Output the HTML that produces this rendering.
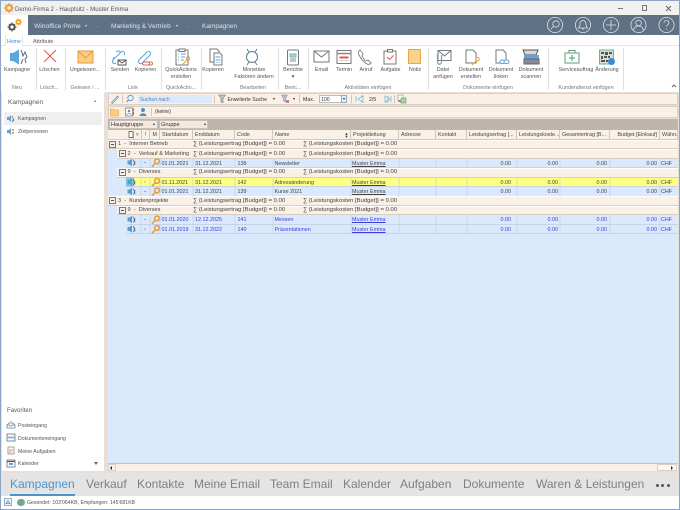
<!DOCTYPE html>
<html><head><meta charset="utf-8">
<style>
*{box-sizing:border-box}
html,body{margin:0;padding:0}
body{width:680px;height:510px;overflow:hidden;background:#e9dfd7;font-family:"Liberation Sans",sans-serif;color:#444}
div,span,svg{position:absolute}
#w{left:0;top:0;width:680px;height:510px;background:#e9dfd7;overflow:hidden;filter:blur(.3px)}
.t{white-space:nowrap;font-size:5.2px;line-height:7px;color:#555}
.c{white-space:nowrap;font-size:5.4px;line-height:6.7px;color:#555;text-align:center;transform:translateX(-50%)}
.g{color:#777}
.h{white-space:nowrap;font-size:5.4px;line-height:10.500px;top:130px;height:9.5px;background:#faf0e6;border-right:1px solid #cfc8c0;border-bottom:1px solid #cfc8c0;color:#444;padding-left:2px;overflow:hidden}
.r{left:108px;width:570px;height:9.5px}
.grp{background:#faf0e6;border-bottom:1px solid #d6cdc4;border-top:1px solid #fff}
.d{background:#dbe9fd;border-bottom:1px solid #c6d4e6}
.y{background:#ffff80;border-bottom:1px solid #c6d4e6}
.s{white-space:nowrap;font-size:5.4px;line-height:11px;color:#444}
.m{font-size:5.9px}
.b{color:#3b3bdc}
.u{text-decoration:underline}
.n{text-align:right}
.v{width:1px;background:#e2e0dd}
.tb{white-space:nowrap;font-size:12px;line-height:16px;color:#808080;top:476px}
.x{width:7px;height:7px;border:1px solid #777;background:#f4f1ec}
.x:after{content:"";position:absolute;left:1px;top:2px;width:3px;height:1px;background:#555}
</style></head>
<body>
<div id="w">
<!-- window -->
<div style="left:0;top:0;width:680px;height:1px;background:#8fa3c3"></div>
<div style="left:0;top:1px;width:680px;height:14px;background:#f1f1f1"></div>
<svg style="left:4px;top:3px" width="10" height="10" viewBox="0 0 10 10"><circle cx="5" cy="5" r="2.8" fill="none" stroke="#ee9a2e" stroke-width="2"/><path d="M5 0v2M5 8v2M0 5h2M8 5h2M1.500 1.500l1.400 1.400M7.100 7.100l1.400 1.400M1.500 8.500l1.400-1.400M7.100 2.900l1.400-1.400" stroke="#ee9a2e" stroke-width="1.200"/></svg>
<div class="t" style="left:15px;top:6px;font-size:6.100px">Demo-Firma 2 - Hauptsitz - Muster Emma</div>
<div style="left:618px;top:8px;width:5px;height:1px;background:#777"></div>
<div style="left:642px;top:5px;width:5px;height:6px;border:1px solid #777"></div>
<svg style="left:665px;top:5px" width="7" height="7" viewBox="0 0 7 7"><path d="M1 1l5 5M6 1L1 6" stroke="#666" stroke-width="1"/></svg>

<!-- nav -->
<div style="left:0;top:15px;width:680px;height:20px;background:#5f7185"></div>
<div style="left:1px;top:15px;width:27px;height:20px;background:#fff"></div>
<svg style="left:6px;top:18px" width="17" height="15" viewBox="0 0 17 15"><circle cx="6" cy="9" r="2.600" fill="none" stroke="#555" stroke-width="2"/><path d="M6 4.500v1.500M6 12v1.500M1.500 9H3M9 9h1.500M3 6l1 1M8 11l1 1M3 12l1-1M8 7l1-1" stroke="#555" stroke-width="1.200"/><circle cx="12.500" cy="4" r="1.900" fill="none" stroke="#ef9b20" stroke-width="1.500"/><path d="M12.500 .5v1.200M12.500 6.300v1.200M9 4h1.200M14.800 4H16M10 1.500l.8.800M14.200 5.700l.8.800M10 6.500l.8-.8M14.200 2.300l.8-.8" stroke="#ef9b20" stroke-width="1"/></svg>
<div class="t" style="left:34px;top:23px;font-size:6.700px;color:#dfe4ea">Winoffice Prime</div>
<div style="left:84.500px;top:24.500px;border:1.500px solid transparent;border-top:2px solid #dfe4ea"></div>
<div class="t" style="left:94px;top:22.500px;font-size:6.400px;color:#8a98a8">→</div>
<div class="t" style="left:111px;top:23px;font-size:6.600px;color:#dfe4ea">Marketing &amp; Vertrieb</div>
<div style="left:175.500px;top:24.500px;border:1.500px solid transparent;border-top:2px solid #dfe4ea"></div>
<div class="t" style="left:185px;top:22.500px;font-size:6.400px;color:#8a98a8">→</div>
<div class="t" style="left:202px;top:23px;font-size:6.500px;color:#dfe4ea">Kampagnen</div>
<svg style="left:545px;top:16px" width="135" height="18" viewBox="0 0 135 18" fill="none" stroke="#dfe4ea" stroke-width=".8">
<circle cx="10" cy="9" r="7.600"/><circle cx="11" cy="8" r="3.200"/><path d="M8.600 10.400L6 13"/>
<circle cx="38" cy="9" r="7.600"/><path d="M33.500 12h9c-1.200-1-1.500-2-1.500-4 0-2-1.300-3.500-3-3.500S35 6 35 8c0 2-.3 3-1.500 4zM37 13h2"/>
<circle cx="66" cy="9" r="7.600"/><path d="M66 4v10M61 9h10"/>
<circle cx="93.500" cy="9" r="7.600"/><circle cx="93.500" cy="7" r="2.800"/><path d="M88.500 14c.8-3 2.500-4 5-4s4.200 1 5 4"/>
<circle cx="121.500" cy="9" r="7.600"/><path d="M119 7c0-1.500 1.200-2.500 2.500-2.500s2.500 1 2.500 2.300c0 1.700-2.500 2-2.500 4M121.500 12.500v1"/>
</svg>

<!-- tabs -->
<div style="left:1px;top:35px;width:678px;height:10px;background:#fff"></div>
<div style="left:0;top:45px;width:680px;height:47px;background:#fff;border-top:1px solid #e6e6e6"></div>
<div style="left:5px;top:35px;width:18px;height:11px;background:#fff;border:1px solid #e6e6e6;border-top:0;border-bottom:0"></div>
<div class="t" style="left:7px;top:39px;color:#3c8ad0">Home</div>
<div class="t" style="left:33px;top:39px;font-size:5.500px">Attribute</div>

<!-- ribbon separators -->
<div class="v" style="left:36px;top:48px;height:42px"></div>
<div class="v" style="left:65px;top:48px;height:42px"></div>
<div class="v" style="left:105px;top:48px;height:42px"></div>
<div class="v" style="left:161px;top:48px;height:42px"></div>
<div class="v" style="left:201px;top:48px;height:42px"></div>
<div class="v" style="left:278px;top:48px;height:42px"></div>
<div class="v" style="left:308px;top:48px;height:42px"></div>
<div class="v" style="left:428px;top:48px;height:42px"></div>
<div class="v" style="left:548px;top:48px;height:42px"></div>
<div class="v" style="left:623px;top:48px;height:42px"></div>

<!-- ribbon icons -->
<svg style="left:0;top:45px" width="680" height="22" viewBox="0 45 680 22" fill="none" stroke-width="1">
<path d="M10 53h3l6-3.500v15L13 61h-3z" fill="#5ca6da"/><path d="M21 50l2 6 2-4 2 5-2 2 1 4M21 64l2-5" stroke="#667"/>
<path d="M44 50l12 12M56 50L44 62" stroke="#e3574c"/>
<rect x="78" y="51" width="15" height="12" fill="#f8cf7e" stroke="#e89a3c"/><path d="M78 51l7.500 7 7.500-7" stroke="#e89a3c"/>
<path d="M113 60l8-8c2-2 5 1 3 3M113 60c-2 2 1 5 3 3M116 52c2-2 5-1 4 1M114 57l-1 2" stroke="#5ca6da"/><path d="M118 60h8v5h-8zM118 60l4 3 4-3" stroke="#555" fill="#fff"/>
<path d="M139 60l8-8c2-2 5 1 3 3l-7 7M139 60c-2 2 1 5 3 3" stroke="#5ca6da"/><path d="M144 62h4c2 0 2 3 0 3h-4c-2 0-2-3 0-3zM149 62h2c2 0 2 3 0 3h-3" stroke="#d9685c"/>
<path d="M176 50h12v15h-12z" stroke="#777"/><rect x="179" y="49" width="6" height="2.500" stroke="#777" fill="#fff"/><path d="M178 54h1M181 54h5M178 57h1M181 57h4M178 60h1M181 60h3" stroke="#5ca6da"/><path d="M183 64l4-4" stroke="#ec9a3a"/><circle cx="188" cy="58.500" r="1.800" stroke="#ec9a3a"/>
<path d="M210 49h7l2 2v11h-9z" stroke="#777"/><path d="M214 53h6l2 2v10h-8z" stroke="#777" fill="#fff"/><path d="M215.500 56h5v2h-5zM215.500 59h5v2h-5zM215.500 62h5v1h-5z" fill="#a9d0ee" stroke="none"/>
<circle cx="252" cy="57" r="5.500" stroke="#5c7c94"/><path d="M247 49l2 3M257 49l-2 3M247 65l2-3M257 65l-2-3" stroke="#5c7c94"/>
<rect x="287.500" y="50" width="11" height="15" rx="1" stroke="#777"/><rect x="290" y="54" width="6" height="3" fill="#a9d0ee" stroke="#7ba"/><path d="M290 59h6M290 61h6" stroke="#888"/>
<rect x="314" y="51" width="15" height="11" stroke="#777"/><path d="M314 51l7.500 6 7.500-6" stroke="#777"/>
<rect x="337" y="50.500" width="14" height="13" stroke="#777"/><path d="M337 53.500h14" stroke="#888" stroke-width="1.500"/><path d="M339.500 57.500h9" stroke="#e3574c" stroke-width="2"/><path d="M339.500 60.500h9" stroke="#ccc"/>
<path d="M360 50c-2 1-2 3-1 5 2 4 4 7 8 9 2 1 3 0 4-1l-3-3-2 1c-2-1-3-3-4-5l1-2z" stroke="#888"/>
<rect x="384" y="51" width="12" height="13" stroke="#777"/><rect x="387.500" y="49.500" width="5" height="2.500" stroke="#777" fill="#fff"/><path d="M387 57l2.500 2.500 4-4" stroke="#e3574c"/>
<rect x="408.500" y="49.500" width="12" height="14" fill="#f8d488" stroke="#e8a550"/>
<rect x="438" y="50.500" width="13" height="10" stroke="#777"/><path d="M438 50.500l6.500 5.500 6.500-5.500" stroke="#777"/><path d="M437.500 54v8c0 3 4 3 4 0v-7" stroke="#5ca6da" stroke-width="1.200"/>
<path d="M466 50h7l3 3v10h-10z" stroke="#777"/><path d="M472 65l5-5" stroke="#ec9a3a"/><circle cx="477.500" cy="59" r="1.800" stroke="#ec9a3a"/>
<path d="M496 50h7l3 3v10h-10z" stroke="#777"/><rect x="500" y="60" width="5" height="3.500" rx="1.700" stroke="#5ca6da" fill="#fff"/><rect x="504" y="60" width="5" height="3.500" rx="1.700" stroke="#5ca6da" fill="#fff"/>
<path d="M525 55l-2-5h15l-2 5z" stroke="#555" fill="#d8d8d8"/><rect x="524" y="55" width="15" height="4" fill="#5ca6da"/><rect x="524" y="59" width="15" height="5" fill="#889" stroke="#666"/>
<rect x="565" y="53" width="14" height="10" stroke="#5f9a80"/><path d="M569 53v-2.500h6V53" stroke="#5f9a80"/><path d="M572 55v6M569 58h6" stroke="#71bd8f" stroke-width="1.500"/>
<rect x="599.500" y="50" width="14" height="14" fill="#d6ded6" stroke="#6bb58c"/><path d="M601 52h3v2h-3zM605 52h3v3h-3zM609 52h3v2h-3zM601 56h2v3h-2zM604 56h3v2h-3zM608 56h2v2h-2zM601 60h4v2h-4zM606 60h2v2h-2z" fill="#555" stroke="none"/><circle cx="611.500" cy="61.500" r="3.500" fill="#3c8ad0"/>
</svg>
<svg style="left:670px;top:83px" width="8" height="6" viewBox="0 0 8 6"><path d="M2 4l2-2 2 2" stroke="#666" fill="none"/></svg>

<!-- ribbon labels -->
<div class="c" style="left:17px;top:67px">Kampagne</div>
<div class="c" style="left:49.500px;top:67px">Löschen</div>
<div class="c" style="left:85px;top:67px">Ungelesen...</div>
<div class="c" style="left:120px;top:67px">Senden</div>
<div class="c" style="left:145.500px;top:67px">Kopieren</div>
<div class="c" style="left:181px;top:67px">QuickActions<br>erstellen</div>
<div class="c" style="left:213px;top:67px">Kopieren</div>
<div class="c" style="left:254px;top:67px">Monetäre<br>Faktoren ändern</div>
<div class="c" style="left:293px;top:67px">Berichte<br>▾</div>
<div class="c" style="left:321.500px;top:67px">Email</div>
<div class="c" style="left:344px;top:67px">Termin</div>
<div class="c" style="left:366px;top:67px">Anruf</div>
<div class="c" style="left:390.500px;top:67px">Aufgabe</div>
<div class="c" style="left:415px;top:67px">Notiz</div>
<div class="c" style="left:443px;top:67px">Datei<br>anfügen</div>
<div class="c" style="left:471px;top:67px">Dokument<br>erstellen</div>
<div class="c" style="left:501px;top:67px">Dokument<br>linken</div>
<div class="c" style="left:531px;top:67px">Dokument<br>scannen</div>
<div class="c" style="left:576px;top:67px">Serviceauftrag</div>
<div class="c" style="left:607px;top:67px">Änderung</div>
<div class="c g" style="left:17px;top:84.500px">Neu</div>
<div class="c g" style="left:49.500px;top:84.500px">Lösch...</div>
<div class="c g" style="left:85px;top:84.500px">Gelesen / ...</div>
<div class="c g" style="left:133px;top:84.500px">Link</div>
<div class="c g" style="left:181px;top:84.500px">QuickActio...</div>
<div class="c g" style="left:253px;top:84.500px">Bearbeiten</div>
<div class="c g" style="left:293px;top:84.500px">Beric...</div>
<div class="c g" style="left:368px;top:84.500px">Aktivitäten einfügen</div>
<div class="c g" style="left:488px;top:84.500px">Dokumente einfügen</div>
<div class="c g" style="left:586px;top:84.500px">Kundendienst einfügen</div>

<!-- sidebar -->
<div style="left:2px;top:92px;width:102px;height:379px;background:#fff"></div>
<div class="t" style="left:8px;top:99px;font-size:6.500px">Kampagnen</div>
<div class="t" style="left:94px;top:99px;font-size:6px;color:#777">▪</div>
<div style="left:4px;top:112px;width:98px;height:13px;background:#efefef"></div>
<svg style="left:6px;top:114px" width="9" height="9" viewBox="0 0 9 9"><path d="M1 3h2l2-2v7L3 6H1z" fill="#5ca6da"/><path d="M6 2l2 5M6 8l2-3" stroke="#666" stroke-width=".7"/></svg>
<div class="t" style="left:18px;top:116px">Kampagnen</div>
<svg style="left:6px;top:127px" width="9" height="9" viewBox="0 0 9 9"><path d="M1 3h2l2-2v7L3 6H1z" fill="#5ca6da"/><path d="M6 2h2v2H6zM6 5h2v2H6z" fill="#e9a14a"/></svg>
<div class="t" style="left:18px;top:129px">Zielpersonen</div>
<div class="t" style="left:7px;top:408px;font-size:6px">Favoriten</div>
<svg style="left:6px;top:420px" width="10" height="50" viewBox="0 0 10 50" fill="none" stroke-width=".7">
<path d="M1 5l2-2h4l2 2v3H1zM1 5h2.500l1 1h1l1-1H9" stroke="#5a7d9c"/><path d="M5 .5v3" stroke="#e9a14a"/>
<rect x="1" y="14" width="8" height="7" stroke="#556"/><rect x="1" y="16.500" width="8" height="2" fill="#8ab7dc" stroke="none"/>
<rect x="2" y="27" width="6" height="7" stroke="#777"/><path d="M3 30h4M3 32h3" stroke="#d9685c"/>
<rect x="1" y="40" width="8" height="7" stroke="#556"/><path d="M1 41.500h8" stroke="#556" stroke-width="1.200"/><path d="M3 44h4" stroke="#5ca6da" stroke-width="2"/>
</svg>
<div class="t" style="left:18px;top:423px">Posteingang</div>
<div class="t" style="left:18px;top:436px">Dokumenteneingang</div>
<div class="t" style="left:18px;top:449px">Meine Aufgaben</div>
<div class="t" style="left:18px;top:461px">Kalender</div>
<div style="left:94px;top:462px;border:2.500px solid transparent;border-top:3px solid #666"></div>

<!-- toolbars -->
<div style="left:108px;top:93px;width:570px;height:11.500px;background:#faf0e6;border:1px solid #d9d0c7"></div>
<div style="left:108px;top:106px;width:570px;height:11.500px;background:#faf0e6;border:1px solid #d9d0c7"></div>
<svg style="left:110px;top:94px" width="10" height="10" viewBox="0 0 10 10" fill="none"><path d="M1.500 8.500L7.500 2l1 1-6 6.500z" stroke="#6b9bbb" stroke-width=".8"/></svg>
<div class="v" style="left:121.500px;top:95px;height:8px;background:#cfc8c0"></div>
<svg style="left:125px;top:94px" width="10" height="10" viewBox="0 0 10 10" fill="none"><circle cx="5.500" cy="4" r="2.700" stroke="#4a90c8" stroke-width=".8"/><path d="M3.500 6L1.500 8" stroke="#4a90c8"/></svg>
<div style="left:138px;top:94.500px;width:74px;height:8.500px;background:#dbe9fd"></div>
<div class="t" style="left:139.500px;top:96.500px;color:#6a7f99;font-style:italic">Suchen nach</div>
<div class="v" style="left:214px;top:95px;height:8px;background:#cfc8c0"></div>
<svg style="left:218px;top:94px" width="8" height="10" viewBox="0 0 8 10"><path d="M.5 1h7L5 4.500V9L3 8V4.500z" fill="#b8c4bc" stroke="#667" stroke-width=".5"/></svg>
<div class="t" style="left:227.500px;top:96.500px;color:#333">Erweiterte Suche</div>
<div style="left:272.500px;top:97.500px;border:1.500px solid transparent;border-top:2px solid #333"></div>
<svg style="left:281px;top:94px" width="10" height="10" viewBox="0 0 10 10"><path d="M.5 1h6L4.500 4.500V8L2.500 7V4.500z" fill="#b8bcbc" stroke="#889" stroke-width=".5"/><rect x="5" y="6" width="3" height="3" fill="#c878a8"/></svg>
<div style="left:293px;top:97.500px;border:1.500px solid transparent;border-top:2px solid #333"></div>
<div class="v" style="left:298.500px;top:95px;height:8px;background:#cfc8c0"></div>
<div class="t" style="left:303px;top:96.500px;color:#333">Max.</div>
<div style="left:319px;top:94.500px;width:28px;height:8.500px;background:#fff;border:1px solid #bbb"></div>
<div class="t" style="left:321px;top:96.500px;color:#333">100</div>
<div style="left:341px;top:95px;width:6px;height:8px;background:#e8eef8;border:1px solid #9ab"></div>
<div style="left:342.500px;top:98px;border:1.500px solid transparent;border-top:2px solid #1a1a9c"></div>
<div class="v" style="left:350.500px;top:95px;height:8px;background:#cfc8c0"></div>
<svg style="left:355px;top:95px" width="50" height="9" viewBox="0 0 50 9" fill="none" stroke="#69b0de" stroke-width=".7"><path d="M1 1v6M8 1L3 4l5 3zM6 1h2M6 7h2"/><path d="M33 1v6h-3M30 1l5 3-5 3zM36 1v6"/></svg>
<div class="t" style="left:369px;top:96.500px;color:#333">2/5</div>
<div class="v" style="left:394px;top:95px;height:8px;background:#cfc8c0"></div>
<svg style="left:397px;top:94px" width="10" height="10" viewBox="0 0 10 10"><rect x="1" y="1" width="5" height="6" fill="#fff" stroke="#888" stroke-width=".6"/><rect x="4" y="4" width="5" height="5" fill="#a8d8a0" stroke="#4f9a5a" stroke-width=".6"/><rect x="1.500" y="6" width="2" height="2" fill="#d9685c"/></svg>
<svg style="left:110px;top:107px" width="46" height="10" viewBox="0 0 46 10"><path d="M.5 2h3l1 1h4v6h-8z" fill="#f8cf7e" stroke="#e89a3c" stroke-width=".6"/><rect x="15.500" y="1" width="7" height="8" fill="#fff" stroke="#555" stroke-width=".6"/><circle cx="19" cy="4" r="1.300" fill="#888"/><path d="M17 8c0-2 4-2 4 0" stroke="#888" stroke-width=".7" fill="none"/><rect x="23" y="1.500" width="1" height="3" fill="#e3574c"/><rect x="23" y="5" width="1" height="3" fill="#4f9a5a"/><circle cx="33" cy="3" r="2" fill="#4a90c8"/><path d="M29.500 9c0-3.500 7-3.500 7 0z" fill="#4a90c8"/></svg>
<div class="v" style="left:150.500px;top:108px;height:8px;background:#cfc8c0"></div>
<div class="t" style="left:155px;top:109px;color:#333">(keine)</div>

<!-- group panel -->
<div style="left:108px;top:118.500px;width:570px;height:11.500px;background:#bdb6ae"></div>
<div style="left:109px;top:119.500px;width:49px;height:9.500px;background:#f3e9df;border:1px solid #c9c0b7"></div>
<div class="t" style="left:111px;top:122px;color:#333;font-size:5.600px">Hauptgruppe</div>
<div style="left:153px;top:121.500px;border:1.500px solid transparent;border-bottom:2px solid #333"></div>
<div style="left:159px;top:119.500px;width:49px;height:9.500px;background:#f3e9df;border:1px solid #c9c0b7"></div>
<div class="t" style="left:161px;top:122px;color:#333;font-size:5.600px">Gruppe</div>
<div style="left:203.500px;top:121.500px;border:1.500px solid transparent;border-bottom:2px solid #333"></div>

<!-- grid header -->
<div class="h" style="left:108px;width:19px;border-right:0"></div>
<div class="h" style="left:127px;width:6.500px"></div>
<div class="h" style="left:133.500px;width:8px;padding-left:2.500px">▿</div>
<div class="h" style="left:141.500px;width:8.500px;padding-left:3px">!</div>
<div class="h" style="left:150px;width:10px;padding-left:2.500px">M</div>
<div class="h" style="left:160px;width:33px">Startdatum</div>
<div class="h" style="left:193px;width:42px">Enddatum</div>
<div class="h" style="left:235px;width:38px">Code</div>
<div class="h" style="left:273px;width:78px">Name</div>
<div class="h" style="left:351px;width:48px">Projektleitung</div>
<div class="h" style="left:399px;width:37px">Adresse</div>
<div class="h" style="left:436px;width:31px">Kontakt</div>
<div class="h" style="left:467px;width:50px">Leistungsertrag [...</div>
<div class="h" style="left:517px;width:43px">Leistungskoste...</div>
<div class="h" style="left:560px;width:50px">Gesamtertrag [B...</div>
<div class="h" style="left:610px;width:50px;text-align:right;padding-right:2px">Budget [Einkauf]</div>
<div class="h" style="left:660px;width:18px">Währu</div>
<svg style="left:128px;top:131px" width="6" height="7" viewBox="0 0 6 7"><path d="M1 .5h3l1 1v5H1z" fill="#fff" stroke="#444" stroke-width=".7"/></svg>
<div class="t" style="left:344.500px;top:131.500px;font-size:4px;color:#444;line-height:3.500px">▲<br>▼</div>

<!-- data area -->
<div style="left:108px;top:139.500px;width:570px;height:323.500px;background:#dbe9fd"></div>

<!-- rows -->
<div class="r grp" style="top:139.500px"></div>
<div class="r grp" style="top:149px;left:117px;width:561px"></div>
<div class="r d" style="top:158.500px;left:126px;width:552px"></div>
<div class="r grp" style="top:168px;left:117px;width:561px"></div>
<div class="r y" style="top:177.500px;left:126px;width:552px"></div>
<div class="r d" style="top:187px;left:126px;width:552px"></div>
<div class="r grp" style="top:196px"></div>
<div class="r grp" style="top:205.500px;left:117px;width:561px"></div>
<div class="r d" style="top:215px;left:126px;width:552px"></div>
<div class="r d" style="top:224.500px;left:126px;width:552px"></div>

<!-- col guide lines on data rows -->
<svg style="left:126px;top:158px" width="552" height="76" viewBox="126 158 552 76" stroke="#c2d0e2" stroke-width=".7">
<path d="M141 158.500v9.500M150 158.500v9.500M160 158.500v9.500M193 158.500v9.500M235 158.500v9.500M273 158.500v9.500M351 158.500v9.500M399 158.500v9.500M436 158.500v9.500M467 158.500v9.500M517 158.500v9.500M560 158.500v9.500M610 158.500v9.500M660 158.500v9.500"/>
<path d="M141 177.500v19M150 177.500v19M160 177.500v19M193 177.500v19M235 177.500v19M273 177.500v19M351 177.500v19M399 177.500v19M436 177.500v19M467 177.500v19M517 177.500v19M560 177.500v19M610 177.500v19M660 177.500v19"/>
<path d="M141 215v19M150 215v19M160 215v19M193 215v19M235 215v19M273 215v19M351 215v19M399 215v19M436 215v19M467 215v19M517 215v19M560 215v19M610 215v19M660 215v19"/>
</svg>

<!-- expanders -->
<div class="x" style="left:109px;top:140.500px"></div>
<div class="x" style="left:118.500px;top:150px"></div>
<div class="x" style="left:118.500px;top:169px"></div>
<div class="x" style="left:109px;top:197px"></div>
<div class="x" style="left:118.500px;top:206.500px"></div>

<!-- group text -->
<div class="s" style="left:118px;top:139px;font-size:5.600px">1 &nbsp;- &nbsp;Interner Betrieb</div>
<div class="s" style="left:127.500px;top:148.500px;font-size:5.600px">2 &nbsp;- &nbsp;Verkauf &amp; Marketing</div>
<div class="s" style="left:127.500px;top:167px;font-size:5.600px">9 &nbsp;- &nbsp;Diverses</div>
<div class="s" style="left:118px;top:195.500px;font-size:5.600px">3 &nbsp;- &nbsp;Kundenprojekte</div>
<div class="s" style="left:127.500px;top:205px;font-size:5.600px">9 &nbsp;- &nbsp;Diverses</div>

<div class="s m" style="left:193px;top:139px">∑ {Leistungsertrag [Budget]} = 0.00</div>
<div class="s m" style="left:303px;top:139px">∑ {Leistungskosten [Budget]} = 0.00</div>
<div class="s m" style="left:193px;top:148.500px">∑ {Leistungsertrag [Budget]} = 0.00</div>
<div class="s m" style="left:303px;top:148.500px">∑ {Leistungskosten [Budget]} = 0.00</div>
<div class="s m" style="left:193px;top:167px">∑ {Leistungsertrag [Budget]} = 0.00</div>
<div class="s m" style="left:303px;top:167px">∑ {Leistungskosten [Budget]} = 0.00</div>
<div class="s m" style="left:193px;top:195.500px">∑ {Leistungsertrag [Budget]} = 0.00</div>
<div class="s m" style="left:303px;top:195.500px">∑ {Leistungskosten [Budget]} = 0.00</div>
<div class="s m" style="left:193px;top:205px">∑ {Leistungsertrag [Budget]} = 0.00</div>
<div class="s m" style="left:303px;top:205px">∑ {Leistungskosten [Budget]} = 0.00</div>

<!-- row icons -->
<svg style="left:126px;top:158px" width="36" height="76" viewBox="0 0 36 76">
<g><path d="M1.500 2.500H3.500L6 .8v7.400L3.500 6.500H1.500z" fill="#5a9bd0"/><path d="M7 1.500l1.500 3-1 3M8.800 3v4" stroke="#5a7088" stroke-width=".8" fill="none"/><path d="M18 4.500h2" stroke="#888" stroke-width=".7"/><circle cx="31" cy="3.400" r="2.400" fill="none" stroke="#e59a3c" stroke-width="1.500"/><path d="M29.300 5.200L26.500 8l.8.800" stroke="#e59a3c" stroke-width="1.400" fill="none"/></g>
<g transform="translate(0,19.500)"><path d="M0 0h8v9H0z" fill="#7fc4e8"/><path d="M1.500 2.500H3.500L6 .8v7.400L3.500 6.500H1.500z" fill="#5a9bd0"/><path d="M7 1.500l1.500 3-1 3M8.800 3v4" stroke="#5a7088" stroke-width=".8" fill="none"/><path d="M18 4.500h2" stroke="#888" stroke-width=".7"/><circle cx="31" cy="3.400" r="2.400" fill="none" stroke="#e59a3c" stroke-width="1.500"/><path d="M29.300 5.200L26.500 8l.8.800" stroke="#e59a3c" stroke-width="1.400" fill="none"/></g>
<g transform="translate(0,29)"><path d="M1.500 2.500H3.500L6 .8v7.400L3.500 6.500H1.500z" fill="#5a9bd0"/><path d="M7 1.500l1.500 3-1 3M8.800 3v4" stroke="#5a7088" stroke-width=".8" fill="none"/><path d="M18 4.500h2" stroke="#888" stroke-width=".7"/><circle cx="31" cy="3.400" r="2.400" fill="none" stroke="#e59a3c" stroke-width="1.500"/><path d="M29.300 5.200L26.500 8l.8.800" stroke="#e59a3c" stroke-width="1.400" fill="none"/></g>
<g transform="translate(0,57)"><path d="M1.500 2.500H3.500L6 .8v7.400L3.500 6.500H1.500z" fill="#5a9bd0"/><path d="M7 1.500l1.500 3-1 3M8.800 3v4" stroke="#5a7088" stroke-width=".8" fill="none"/><path d="M18 4.500h2" stroke="#888" stroke-width=".7"/><circle cx="31" cy="3.400" r="2.400" fill="none" stroke="#e59a3c" stroke-width="1.500"/><path d="M29.300 5.200L26.500 8l.8.800" stroke="#e59a3c" stroke-width="1.400" fill="none"/></g>
<g transform="translate(0,66.500)"><path d="M1.500 2.500H3.500L6 .8v7.400L3.500 6.500H1.500z" fill="#5a9bd0"/><path d="M7 1.500l1.500 3-1 3M8.800 3v4" stroke="#5a7088" stroke-width=".8" fill="none"/><path d="M18 4.500h2" stroke="#888" stroke-width=".7"/><circle cx="31" cy="3.400" r="2.400" fill="none" stroke="#e59a3c" stroke-width="1.500"/><path d="M29.300 5.200L26.500 8l.8.800" stroke="#e59a3c" stroke-width="1.400" fill="none"/></g>
</svg>

<!-- data: row 138 -->
<div class="s" style="left:161.500px;top:158.500px">01.01.2021</div><div class="s" style="left:195px;top:158.500px">31.12.2021</div><div class="s" style="left:237.500px;top:158.500px">138</div><div class="s" style="left:274.500px;top:158.500px">Newsletter</div><div class="s u" style="left:352px;top:158.500px">Muster Emma</div>
<div class="s n" style="left:467px;width:44px;top:158.500px">0.00</div><div class="s n" style="left:517px;width:41px;top:158.500px">0.00</div><div class="s n" style="left:560px;width:47px;top:158.500px">0.00</div><div class="s n" style="left:610px;width:47px;top:158.500px">0.00</div><div class="s" style="left:661px;top:158.500px">CHF</div>
<!-- row 142 -->
<div class="s" style="left:161.500px;top:177.500px">01.11.2021</div><div class="s" style="left:195px;top:177.500px">31.12.2021</div><div class="s" style="left:237.500px;top:177.500px">142</div><div class="s" style="left:274.500px;top:177.500px">Adressänderung</div><div class="s u" style="left:352px;top:177.500px">Muster Emma</div>
<div class="s n" style="left:467px;width:44px;top:177.500px">0.00</div><div class="s n" style="left:517px;width:41px;top:177.500px">0.00</div><div class="s n" style="left:560px;width:47px;top:177.500px">0.00</div><div class="s n" style="left:610px;width:47px;top:177.500px">0.00</div><div class="s" style="left:661px;top:177.500px">CHF</div>
<!-- row 139 -->
<div class="s" style="left:161.500px;top:187px">01.01.2021</div><div class="s" style="left:195px;top:187px">31.12.2021</div><div class="s" style="left:237.500px;top:187px">139</div><div class="s" style="left:274.500px;top:187px">Kurse 2021</div><div class="s u" style="left:352px;top:187px">Muster Emma</div>
<div class="s n" style="left:467px;width:44px;top:187px">0.00</div><div class="s n" style="left:517px;width:41px;top:187px">0.00</div><div class="s n" style="left:560px;width:47px;top:187px">0.00</div><div class="s n" style="left:610px;width:47px;top:187px">0.00</div><div class="s" style="left:661px;top:187px">CHF</div>
<!-- row 141 -->
<div class="s b" style="left:161.500px;top:215px">01.01.2020</div><div class="s b" style="left:195px;top:215px">12.12.2025</div><div class="s b" style="left:237.500px;top:215px">141</div><div class="s b" style="left:274.500px;top:215px">Messen</div><div class="s b u" style="left:352px;top:215px">Muster Emma</div>
<div class="s n b" style="left:467px;width:44px;top:215px">0.00</div><div class="s n b" style="left:517px;width:41px;top:215px">0.00</div><div class="s n b" style="left:560px;width:47px;top:215px">0.00</div><div class="s n b" style="left:610px;width:47px;top:215px">0.00</div><div class="s b" style="left:661px;top:215px">CHF</div>
<!-- row 140 -->
<div class="s b" style="left:161.500px;top:224.500px">01.01.2019</div><div class="s b" style="left:195px;top:224.500px">31.12.2022</div><div class="s b" style="left:237.500px;top:224.500px">140</div><div class="s b" style="left:274.500px;top:224.500px">Präsentationen</div><div class="s b u" style="left:352px;top:224.500px">Muster Emma</div>
<div class="s n b" style="left:467px;width:44px;top:224.500px">0.00</div><div class="s n b" style="left:517px;width:41px;top:224.500px">0.00</div><div class="s n b" style="left:560px;width:47px;top:224.500px">0.00</div><div class="s n b" style="left:610px;width:47px;top:224.500px">0.00</div><div class="s b" style="left:661px;top:224.500px">CHF</div>

<!-- scrollbar -->
<div style="left:108px;top:463px;width:570px;height:8px;background:#faf0e6;border-top:1px solid #b9c4d6"></div>
<div style="left:108px;top:464px;width:8px;height:7px;background:#f3f3f3;border:1px solid #d9d0c7"></div>
<div style="left:110px;top:465.500px;border:2px solid transparent;border-right:2.500px solid #1a1a9c;border-left:0"></div>
<div style="left:657px;top:464px;width:20px;height:7px;background:#fdf8f2;border:1px solid #d9d0c7"></div>
<div style="left:671px;top:465.500px;border:2px solid transparent;border-left:2.500px solid #1a1a9c;border-right:0"></div>

<!-- bottom tabs -->
<div style="left:0;top:473px;width:680px;height:23px;background:#e4e4e4"></div>
<div class="tb" style="left:10px;color:#4d94cc">Kampagnen</div>
<div style="left:10px;top:494px;width:65px;height:1.500px;background:#4d94cc"></div>
<div class="tb" style="left:86px">Verkauf</div>
<div class="tb" style="left:137px">Kontakte</div>
<div class="tb" style="left:194px">Meine Email</div>
<div class="tb" style="left:270px">Team Email</div>
<div class="tb" style="left:343px">Kalender</div>
<div class="tb" style="left:400px">Aufgaben</div>
<div class="tb" style="left:463px">Dokumente</div>
<div class="tb" style="left:536px">Waren &amp; Leistungen</div>
<div style="left:655.500px;top:483.500px;width:3px;height:3px;border-radius:50%;background:#555"></div>
<div style="left:661px;top:483.500px;width:3px;height:3px;border-radius:50%;background:#555"></div>
<div style="left:666.500px;top:483.500px;width:3px;height:3px;border-radius:50%;background:#555"></div>

<!-- status bar -->
<div style="left:0;top:496px;width:680px;height:13px;background:#fff"></div>
<svg style="left:4px;top:498px" width="8" height="8" viewBox="0 0 8 8"><rect x=".5" y=".5" width="7" height="7" fill="#eef4fb" stroke="#5c7c94" stroke-width=".6"/><path d="M2 5.500l2-3 2 3z" fill="none" stroke="#4a90c8" stroke-width=".7"/></svg>
<div style="left:17px;top:498.500px;width:7.500px;height:7.500px;border-radius:50%;background:#6fa98f"></div>
<div class="t" style="left:27px;top:500px">Gesendet: 103'064KB, Empfangen: 145'681KB</div>
<div style="left:0;top:509px;width:680px;height:1px;background:#8fa3c3"></div>
<div style="left:0;top:0;width:1px;height:510px;background:#8fa3c3"></div>
<div style="left:679px;top:0;width:1px;height:510px;background:#8fa3c3"></div>
</div>
</body></html>
